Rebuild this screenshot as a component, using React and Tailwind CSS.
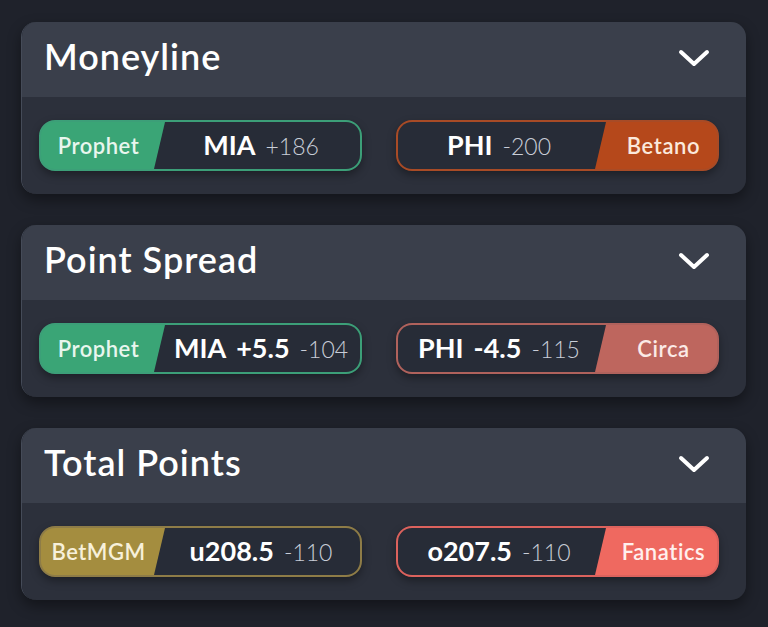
const markets = [
  {
    title: "Moneyline",
    left: { book: "Prophet", pick: "MIA", line: "", odds: "+186", tone: "green" },
    right: { book: "Betano", pick: "PHI", line: "", odds: "-200", tone: "orange" },
  },
  {
    title: "Point Spread",
    left: { book: "Prophet", pick: "MIA", line: "+5.5", odds: "-104", tone: "green" },
    right: { book: "Circa", pick: "PHI", line: "-4.5", odds: "-115", tone: "rose" },
  },
  {
    title: "Total Points",
    left: { book: "BetMGM", pick: "u208.5", line: "", odds: "-110", tone: "gold" },
    right: { book: "Fanatics", pick: "o207.5", line: "", odds: "-110", tone: "coral" },
  },
];

const tones = {
  green: { bg: "bg-[#3aa576]", border: "border-[#3c9f78]", text: "text-[#e8f6ee]" },
  orange: { bg: "bg-[#b5481b]", border: "border-[#a84b26]", text: "text-[#fbe9dc]" },
  rose: { bg: "bg-[#be665e]", border: "border-[#b0625c]", text: "text-[#fbeae7]" },
  gold: { bg: "bg-[#a48d3f]", border: "border-[#8e7c47]", text: "text-[#f7f0da]" },
  coral: { bg: "bg-[#ef6960]", border: "border-[#dc625d]", text: "text-[#fff0ee]" },
};

function Chevron() {
  return (
    <svg width="32" height="18" viewBox="0 0 32 18" fill="none">
      <path
        d="M3 3 L16 15 L29 3"
        stroke="white"
        strokeWidth="4"
        strokeLinecap="round"
        strokeLinejoin="round"
      />
    </svg>
  );
}

function PickText({ bet }) {
  return (
    <span className="flex items-baseline gap-[10px] whitespace-nowrap">
      <span className="text-[27px] font-bold text-white">{bet.pick}</span>
      {bet.line && <span className="text-[27px] font-bold text-white">{bet.line}</span>}
      <span className="text-[23px] font-light text-[#c9ced8]">{bet.odds}</span>
    </span>
  );
}

// book on the left, slant into the dark part
function LeftPill({ bet }) {
  const t = tones[bet.tone];
  return (
    <div
      className={`flex-1 h-[51px] flex rounded-[16px] border-2 overflow-hidden shadow-[0_4px_8px_rgba(0,0,0,0.35)] ${t.bg} ${t.border}`}
    >
      <div className={`w-[113px] shrink-0 flex items-center justify-center pl-[2px] text-[22px] tracking-[0.5px] font-semibold ${t.text}`}>
        {bet.book}
      </div>
      <div className="flex-1 flex items-center justify-center bg-[#272c37] [clip-path:polygon(11px_0,100%_0,100%_100%,0_100%)] pl-[8px]">
        <PickText bet={bet} />
      </div>
    </div>
  );
}

function RightPill({ bet }) {
  const t = tones[bet.tone];
  return (
    <div
      className={`flex-1 h-[51px] flex rounded-[16px] border-2 overflow-hidden shadow-[0_4px_8px_rgba(0,0,0,0.35)] ${t.bg} ${t.border}`}
    >
      <div className="w-[208px] shrink-0 flex items-center justify-center bg-[#272c37] [clip-path:polygon(0_0,100%_0,calc(100%-11px)_100%,0_100%)] pr-[6px]">
        <PickText bet={bet} />
      </div>
      <div className={`flex-1 flex items-center justify-center pl-[4px] text-[22px] tracking-[0.6px] font-semibold ${t.text}`}>
        {bet.book}
      </div>
    </div>
  );
}

function MarketCard({ market }) {
  return (
    <div className="w-[725px] h-[172px] rounded-[15px] overflow-hidden flex flex-col shadow-[0_6px_14px_rgba(0,0,0,0.4)] border-l border-[#454b58]">
      <div className="h-[75px] bg-[#3a3f4b] flex items-center justify-between pl-[22px] pr-[36px] pb-[4px]">
        <h2 className="text-[36px] font-semibold text-white tracking-[1px] pb-[4px]">{market.title}</h2>
        <Chevron />
      </div>
      <div className="flex-1 bg-[#2c303b] flex items-center gap-[34px] pl-[17px] pr-[27px]">
        <LeftPill bet={market.left} />
        <RightPill bet={market.right} />
      </div>
    </div>
  );
}

export default function App() {
  return (
    <div className="w-[768px] h-[627px] bg-[#1f222b] pt-[22px] pl-[21px] flex flex-col gap-[31px] font-['Lato','Noto_Sans',sans-serif]">
      {markets.map((m) => (
        <MarketCard key={m.title} market={m} />
      ))}
    </div>
  );
}
